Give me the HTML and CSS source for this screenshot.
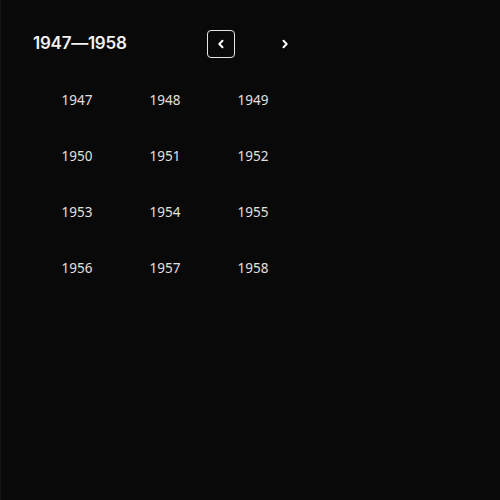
FILE: index.html
```html
<!DOCTYPE html>
<html>
<head>
<meta charset="utf-8">
<link rel="stylesheet" href="styles.css">
</head>
<body>
<div class="panel">
  <div class="header">
    <div class="title">1947—1958</div>
    <div class="nav">
      <button class="navbtn active" aria-label="Previous">
        <svg width="12" height="12" viewBox="0 0 12 12"><path d="M7.5 2.8 L4.3 6 L7.5 9.2" fill="none" stroke="#fff" stroke-width="2" stroke-linecap="round" stroke-linejoin="round"/></svg>
      </button>
      <button class="navbtn" aria-label="Next">
        <svg width="12" height="12" viewBox="0 0 12 12"><path d="M4.5 2.8 L7.7 6 L4.5 9.2" fill="none" stroke="#fff" stroke-width="2" stroke-linecap="round" stroke-linejoin="round"/></svg>
      </button>
    </div>
  </div>
  <div class="grid">
    <div class="cell">1947</div><div class="cell">1948</div><div class="cell">1949</div>
    <div class="cell">1950</div><div class="cell">1951</div><div class="cell">1952</div>
    <div class="cell">1953</div><div class="cell">1954</div><div class="cell">1955</div>
    <div class="cell">1956</div><div class="cell">1957</div><div class="cell">1958</div>
  </div>
</div>
</body>
</html>
```
FILE: styles.css
```css
html, body {
  margin: 0;
  padding: 0;
  background: #090909;
}
body {
  width: 500px;
  height: 500px;
}
.panel {
  box-sizing: border-box;
  height: 500px;
  border-left: 1px solid #161616;
  padding: 16px 32px;
  font-family: "Noto Sans", sans-serif;
  color: #e6e6e6;
}
.header {
  width: 266px;
  height: 56px;
  display: flex;
  align-items: center;
  justify-content: space-between;
}
.title {
  font-family: Inter, sans-serif;
  font-weight: 600;
  font-size: 17px;
  letter-spacing: -0.25px;
  color: #f2f2f2;
  margin-bottom: 3px;
}
.nav {
  display: flex;
  gap: 36px;
}
.navbtn {
  box-sizing: border-box;
  width: 28px;
  height: 28px;
  padding: 0;
  display: flex;
  align-items: center;
  justify-content: center;
  background: transparent;
  border: 1px solid transparent;
  border-radius: 4px;
}
.navbtn.active {
  border-color: #e6e6e6;
}
.grid {
  width: 264px;
  display: grid;
  grid-template-columns: repeat(3, 88px);
  grid-auto-rows: 56px;
}
.cell {
  display: flex;
  align-items: center;
  justify-content: center;
  font-size: 13.5px;
  color: #e0e0e0;
}
```
